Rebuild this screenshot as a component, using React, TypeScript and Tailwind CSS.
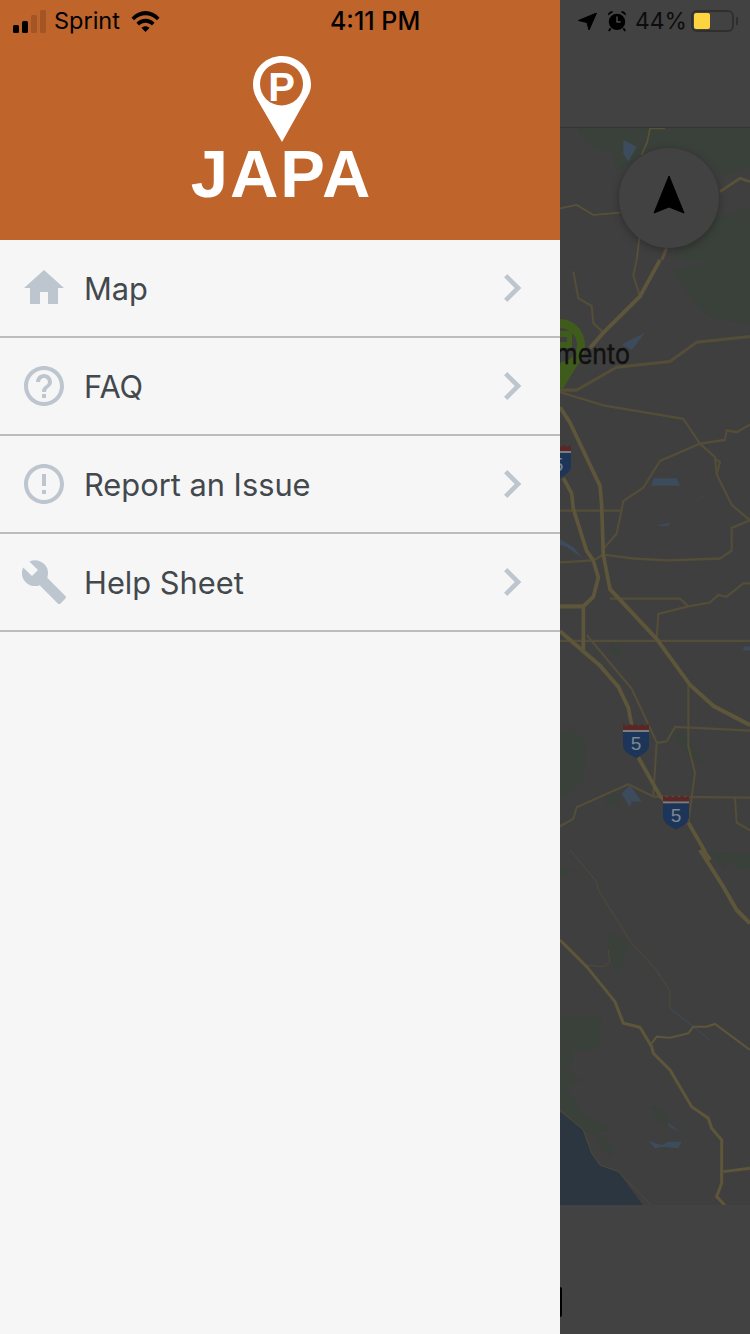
import { MdBuild, MdChevronRight, MdErrorOutline, MdHelpOutline, MdHome } from 'react-icons/md';

const menuItems = [
  { label: 'Map', Icon: MdHome },
  { label: 'FAQ', Icon: MdHelpOutline },
  { label: 'Report an Issue', Icon: MdErrorOutline },
  { label: 'Help Sheet', Icon: MdBuild },
];

function SignalBars() {
  return (
    <div className="flex items-end gap-[3px] h-[23px]">
      <div className="w-[6px] h-[8px] rounded-[1.5px] bg-black" />
      <div className="w-[6px] h-[12px] rounded-[1.5px] bg-black" />
      <div className="w-[6px] h-[18px] rounded-[1.5px] bg-[#a35526]" />
      <div className="w-[6px] h-[23px] rounded-[1.5px] bg-[#a35526]" />
    </div>
  );
}

function WifiIcon() {
  return (
    <svg width="29" height="23" viewBox="0 0 30 23" className="ml-[11px] mt-[1px]">
      <path d="M0.5 7.5C8.5 -1.5 21.5 -1.5 29.5 7.5L26.8 10.3C20 3.4 10 3.4 3.2 10.3Z" fill="#000" />
      <path d="M5.6 12.8C10.8 7.4 19.2 7.4 24.4 12.8L21.6 15.6C17.8 11.9 12.2 11.9 8.4 15.6Z" fill="#000" />
      <path d="M10.8 18C13 15.8 17 15.8 19.2 18L15 22.4Z" fill="#000" />
    </svg>
  );
}

function JapaLogo() {
  return (
    <div className="flex flex-col items-center">
      <svg width="60" height="88" viewBox="0 0 60 88" className="ml-[3px]">
        <path
          d="M30 1C13.8 1 1 13.6 1 29.5C1 36 3.2 40.5 5.5 45L30 87L53.5 45C56.6 40 59 35.5 59 29.5C59 13.6 46.2 1 30 1Z"
          fill="#fff"
        />
        <circle cx="29.5" cy="29" r="21.5" fill="#bf642b" />
        <text
          x="29.5"
          y="45.5"
          textAnchor="middle"
          fill="#fff"
          fontSize="40"
          fontWeight="700"
          fontFamily="Liberation Sans, sans-serif"
        >
          P
        </text>
      </svg>
      <div className="mt-[1px] pl-[3px] text-[67px] leading-[60px] font-bold tracking-[2px] text-white font-['Liberation_Sans',sans-serif]">
        JAPA
      </div>
    </div>
  );
}

function MenuRow({ label, Icon }: any) {
  return (
    <div className="flex items-center h-[98px] pl-[20px] pr-[20px] border-b-2 border-[#bcbcbc]">
      <div className="flex items-center justify-center w-[48px]">
        <Icon size={48} color="#bdc6cf" />
      </div>
      <div className="flex-1 ml-[16px] pt-[2px] text-[30.8px] text-[#43484d]">{label}</div>
      <MdChevronRight size={56} color="#bdc6cf" />
    </div>
  );
}

function Drawer() {
  return (
    <div className="w-[560px] shrink-0 min-h-[1334px] bg-[#f6f6f6] font-['Inter',sans-serif]">
      <div className="h-[240px] bg-[#bf642b] flex flex-col">
        <div className="flex items-center h-[42px] pl-[13px] text-black">
          <SignalBars />
          <span className="ml-[8px] text-[23.5px] leading-none">Sprint</span>
          <WifiIcon />
          <span className="ml-[170px] text-[25px] leading-none font-medium">4:11 PM</span>
        </div>
        <div className="flex justify-center mt-[13px]">
          <JapaLogo />
        </div>
      </div>
      {menuItems.map((item) => (
        <MenuRow key={item.label} {...item} />
      ))}
    </div>
  );
}

function Shield({ x, y }: { x: number; y: number }) {
  return (
    <g transform={`translate(${x} ${y})`}>
      <path d="M-13 -18L-9 -16L-6 -18L-3 -16L0 -18L3 -16L6 -18L9 -16L13 -18V-12H-13Z" fill="#5b2626" />
      <path d="M-13 -12H13V-10H-13Z" fill="#7d7d7d" />
      <path d="M-13 -10H13V3C13 9 6 13 0 16C-6 13 -13 9 -13 3Z" fill="#1d3558" />
      <text x="0" y="8" textAnchor="middle" fontSize="19" fill="#7b8793" fontFamily="Liberation Sans, sans-serif">
        5
      </text>
    </g>
  );
}

function MapArt() {
  return (
    <svg width="190" height="1077" viewBox="0 0 190 1077" className="block">
      <rect width="190" height="1077" fill="#3f3f3f" />

      {/* top part */}
      <g transform="translate(0 -128) scale(0.3333)">
        <g fill="#3a403a">
          <path d="M50 385H570V500L480 530L440 480L330 440L240 470L170 515L160 460L100 445L60 410Z" />
          <path d="M340 700L570 620V780H350Z" />
        </g>
        <path d="M190 420L230 440L205 485L190 460Z" fill="#3c4c5c" />
        <g fill="none" stroke="#5a5238" strokeWidth="5">
          <path d="M315 385H270L262 425L245 465" />
          <path d="M0 625L50 615L100 645L180 638" />
          <path d="M480 575L540 535L570 545" strokeWidth="8" />
          <path d="M240 700L230 780" />
          <path d="M320 745L305 780" strokeWidth="9" />
        </g>
      </g>

      {/* middle part */}
      <g transform="translate(0 132) scale(0.3333 0.3827)">
        <g fill="#3a403a">
          <path d="M335 30L450 0H570V170L450 150L400 110Z" />
          <path d="M0 1240L40 1225L80 1260L70 1360L0 1410Z" />
          <path d="M330 1235L370 1235L440 1320L390 1300Z" />
          <path d="M135 1400L185 1395L175 1425H135Z" />
          <path d="M150 1000L180 1010V1035L150 1025Z" />
        </g>
        <g fill="#3c4c5c">
          <path d="M280 570H350L360 590H275Z" />
          <path d="M410 630L460 600L420 625Z" />
          <path d="M185 220L255 190L215 235Z" />
          <path d="M0 730L40 750L70 780L20 750L0 745Z" />
          <path d="M290 695L330 685L325 695Z" />
          <path d="M550 1010H570V1020H550Z" />
          <path d="M185 1395L210 1372L245 1415H215L210 1430Z" />
        </g>
        <g fill="none" stroke="#544e39" strokeWidth="6">
          <path d="M230 0L220 40L240 95" />
          <path d="M40 30L55 100L95 120L100 165L130 190" />
          <path d="M0 340L50 340L170 280L330 265L410 215L570 200" strokeWidth="8" />
          <path d="M0 345L130 380L370 415L420 480L465 515L470 560L515 640L570 680" />
          <path d="M570 430L530 450L500 445L495 470L420 480L300 525L250 595L190 630L170 715L130 755" />
          <path d="M465 520L480 528L470 560" />
          <path d="M0 655H180" />
          <path d="M0 790L100 785L130 770L220 780L325 785L480 780L515 760V700L570 680" />
          <path d="M150 885H360L385 905L450 895L475 875L500 880L550 845H570" />
          <path d="M385 905L295 925L290 990" />
          <path d="M0 995H570" />
          <path d="M80 980L215 1120L290 1260L280 1400" />
          <path d="M385 1110V1270L405 1340L385 1470" />
          <path d="M290 1262L320 1258L345 1220L570 1230" />
          <path d="M280 1402L570 1405" />
          <path d="M525 1405L530 1470L570 1490" />
          <path d="M0 1480L40 1460L50 1430L205 1370L280 1402" />
        </g>
        <g fill="none" stroke="#5e563a" strokeWidth="11">
          <path d="M300 0L240 95L130 190L90 230" />
          <path d="M0 385L30 425L120 590L125 640L130 770L150 860L290 990L390 1110L460 1165L570 1215" />
          <path d="M0 970L40 1000L120 1060L175 1115L205 1170L215 1215" />
          <path d="M235 1300L300 1400L345 1440" />
          <path d="M385 1470L450 1568" />
          <path d="M10 570L35 610L40 650L80 760L100 785L115 830L100 880L70 905H0" />
          <path d="M70 905V1020" />
        </g>
      </g>

      {/* bottom part */}
      <g transform="translate(0 722) scale(0.3333)">
        <path d="M0 785L70 840L95 910L120 945L175 965L250 1067H0Z" fill="#2c3640" />
        <g fill="#3a403a">
          <path d="M0 500H122L120 590L70 605L35 600L40 640L20 660L65 690L20 715L55 760L60 790L100 810L160 845H120L165 905L150 925L110 880V845L80 850L0 780Z" />
          <path d="M145 245L215 280L190 320V350L165 360L145 310Z" />
          <path d="M268 765L325 790L320 825L300 820Z" />
          <path d="M440 5L570 10V60H535L510 30L490 55Z" />
          <path d="M0 50L40 60L0 80Z" />
        </g>
        <g fill="#3c4c5c">
          <path d="M320 815L360 845L330 830Z" />
          <path d="M265 872L305 885L325 875H365L355 895L310 890L285 895Z" />
        </g>
        <g fill="none" stroke="#4e4a38" strokeWidth="3">
          <path d="M30 0L110 95L115 120L215 280L290 360L330 425V475" />
          <path d="M80 345L130 350L150 335L145 300" />
          <path d="M0 780L70 840L95 910L120 945L175 965L275 1067" />
        </g>
        <path d="M330 475L450 570" fill="none" stroke="#3c4c5c" strokeWidth="3" />
        <g fill="none" stroke="#5e563a" strokeWidth="9">
          <path d="M420 0L490 110L530 180L570 220" strokeWidth="12" />
          <path d="M0 270L80 350L165 455L190 520L240 532L275 590L280 610L330 660L395 770L445 805L455 835L485 870V1000L470 1040L495 1067" />
          <path d="M275 580L290 560L330 563L385 550L400 530L440 530L465 522L570 600" strokeWidth="6" />
          <path d="M490 965L570 955" />
        </g>
      </g>

      <Shield x={-2} y={335} />
      <Shield x={76} y={614} />
      <Shield x={116} y={685.5} />

      {/* green pin under the drawer */}
      <path d="M0 191C14 191 25 203 25 217C25 226 21 232 17 238L2 262L-14 238C-20 230 -25 226 -25 217C-25 203 -14 191 0 191Z" fill="#3f5c1c" />
      <circle cx="0" cy="217" r="17" fill="#3f3f3f" />
      <path d="M0 203H12V220H0Z" fill="#3f5c1c" />
      <path d="M0 209H7V214H0Z" fill="#3f3f3f" />
      <text
        transform="translate(70 236) scale(1 1.12)"
        textAnchor="end"
        fontSize="25"
        fill="#111"
        stroke="#111"
        strokeWidth="0.4"
        fontFamily="Inter, sans-serif"
      >
        mento
      </text>
    </svg>
  );
}

function RightSide() {
  return (
    <div className="relative flex-1 h-[1334px] bg-[#424242] overflow-hidden font-['Inter',sans-serif]">
      <div className="h-[128px] border-b border-[#343434]">
        <div className="flex items-center h-[42px] pl-[18px] text-[#0d0d0d]">
          <svg width="19" height="17" viewBox="0 0 18 17">
            <path d="M18 0L10.5 17L8.5 9.5L0 7.5Z" fill="#000" stroke="#000" strokeLinejoin="round" />
          </svg>
          <svg width="20" height="22" viewBox="0 0 22 24" className="ml-[10px]">
            <circle cx="11" cy="13" r="9" fill="#000" />
            <path d="M11 7V13H15" fill="none" stroke="#424242" strokeWidth="1.8" />
            <path d="M1 6C1 2 5 0 7 2ZM21 6C21 2 17 0 15 2Z" fill="#000" />
            <path d="M4 20L2 23M18 20L20 23" stroke="#000" strokeWidth="2" />
          </svg>
          <span className="ml-[8px] text-[22.8px] leading-none">44%</span>
          <div className="ml-[4px] w-[43px] h-[22px] rounded-[6px] border-2 border-[#2f2f2f] p-[1px]">
            <div className="w-[16px] h-full rounded-[2px] bg-[#fdd33f]" />
          </div>
          <div className="ml-[2px] w-[2px] h-[8px] bg-[#2f2f2f]" />
        </div>
      </div>
      <MapArt />
      <div className="absolute left-[59px] top-[148px] flex items-center justify-center w-[100px] h-[100px] rounded-full bg-[#424242] shadow-[0_2px_8px_rgba(0,0,0,0.3)]">
        <svg width="32" height="40" viewBox="0 0 32 40" className="mb-[7px]">
          <path d="M16 1L31 38L16 32L1 38Z" fill="#000" strokeLinejoin="round" stroke="#000" />
        </svg>
      </div>
      <div className="absolute left-0 top-[1287px] w-[2px] h-[30px] bg-black rounded-r-[2px]" />
    </div>
  );
}

export default function App() {
  return (
    <div className="flex w-[750px] h-[1334px] overflow-hidden">
      <Drawer />
      <RightSide />
    </div>
  );
}
